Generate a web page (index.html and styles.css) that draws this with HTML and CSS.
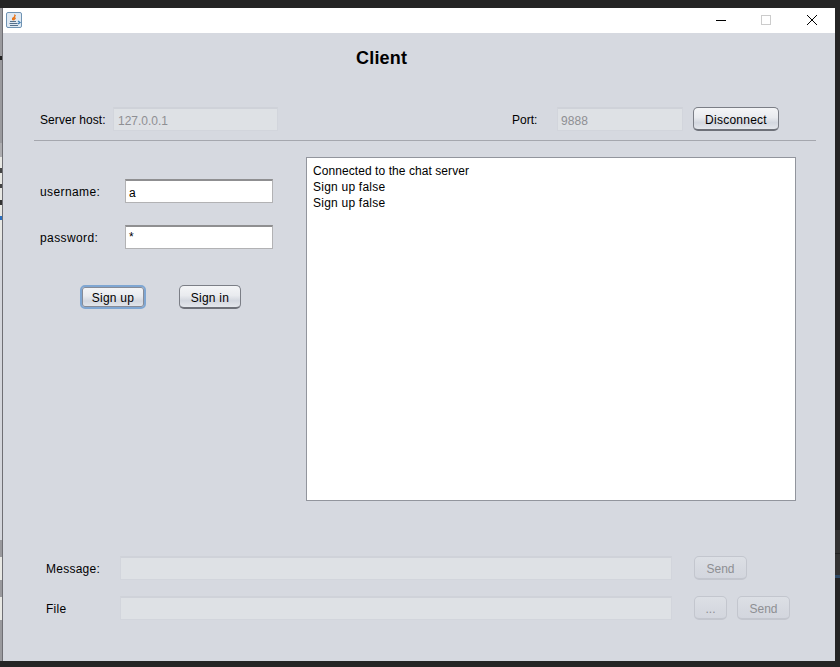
FILE: index.html
```html
<!DOCTYPE html>
<html lang="en">

<head>
  <meta charset="UTF-8">
  <meta name="viewport" content="width=device-width, initial-scale=1.0">
  <title>Client</title>
  <link rel="stylesheet" href="styles.css">
</head>

<body>
  <div class="desktop">
    <div class="behind-left"></div>
    <div class="window">
      <div class="titlebar">
        <svg class="app-icon" width="16" height="16" viewBox="0 0 16 16">
          <rect x="0.5" y="0.5" width="15" height="15" rx="1.5" fill="#dfe9f3" stroke="#6f93b3"/>
          <path d="M8.5 2 L10 3.5 L9 5 L10 6.5 L8 8.5 L6 8 L6 6 L8 4.5 Z" fill="#e8771e"/>
          <path d="M4 9.5 H10 M3.5 11.5 H11.5 M4 13.5 H12" stroke="#55708c" stroke-width="1" fill="none"/>
          <path d="M12 9 L14 10.5 L12 12" stroke="#3f7fb5" stroke-width="1.3" fill="none"/>
        </svg>
        <div class="win-buttons">
          <svg class="win-btn" width="10" height="10" viewBox="0 0 10 10"><path d="M0 5.5 H10" stroke="#000" fill="none"/></svg>
          <svg class="win-btn" width="10" height="10" viewBox="0 0 10 10"><rect x="0.5" y="0.5" width="9" height="9" stroke="#ccc" fill="none"/></svg>
          <svg class="win-btn win-close" width="10" height="10" viewBox="0 0 10 10"><path d="M0 0 L10 10 M10 0 L0 10" stroke="#000" fill="none"/></svg>
        </div>
      </div>

      <div class="content">
        <h1 class="heading">Client</h1>

        <div class="server-row">
          <label class="lbl host-lbl">Server host:</label>
          <input class="field host-field" type="text" value="127.0.0.1" disabled>
          <label class="lbl port-lbl">Port:</label>
          <input class="field port-field" type="text" value="9888" disabled>
          <button class="btn disconnect-btn">Disconnect</button>
        </div>

        <div class="separator"></div>

        <div class="main-row">
          <div class="login-panel">
            <div class="login-row">
              <label class="lbl login-lbl">username:</label>
              <input class="input" type="text" value="a">
            </div>
            <div class="login-row">
              <label class="lbl login-lbl">password:</label>
              <div class="input password">*</div>
            </div>
            <div class="login-buttons">
              <button class="btn signup-btn">Sign up</button>
              <button class="btn signin-btn">Sign in</button>
            </div>
          </div>
          <div class="chat-log">
            <div class="log-line">Connected to the chat server</div>
            <div class="log-line log-status">Sign up false</div>
            <div class="log-line log-status">Sign up false</div>
          </div>
        </div>

        <div class="send-row message-row">
          <label class="lbl send-lbl">Message:</label>
          <input class="field send-field" type="text" disabled>
          <button class="btn send-btn" disabled>Send</button>
        </div>
        <div class="send-row file-row">
          <label class="lbl send-lbl">File</label>
          <input class="field send-field" type="text" disabled>
          <button class="btn browse-btn" disabled>...</button>
          <button class="btn send-btn" disabled>Send</button>
        </div>
      </div>
    </div>
    <div class="behind-right"></div>
  </div>
</body>

</html>
```

FILE: styles.css
```css
html, body {
  margin: 0;
  padding: 0;
  height: 100%;
  overflow: hidden;
  background-color: #252525;
}

body {
  font-family: "Liberation Sans", Arial, sans-serif;
  font-size: 12px;
  color: #000;
}

.desktop {
  display: flex;
  padding-top: 8px;
}

/* other windows showing at the screen edges */
.behind-left {
  width: 3px;
  height: 653px;
  box-sizing: border-box;
  border-right: 1px solid #6f6f74;
  background: linear-gradient(#9a9a9e 0 48px, #222 48px 52px, #9a9a9e 52px 135px, #adadb0 135px 149px,
    #e8e8e4 149px 160px, #444 160px 165px, #e8e8e4 165px 176px, #444 176px 180px, #e8e8e4 180px 192px,
    #333 192px 197px, #e8e8e4 197px 208px, #2a6fc0 208px 212px, #e8e8e4 212px 232px,
    #d4d6dc 232px 532px, #9a9a9e 532px 549px, #e8e8e4 549px 572px, #9a9a9e 572px 589px,
    #e8e8e4 589px 612px, #9a9a9e 612px);
}

.behind-right {
  width: 5px;
  height: 653px;
  background: linear-gradient(#252525 0 522px, #333 522px 545px, #222 545px 546px, #333 546px 567px,
    #2f4a66 567px 570px, #252525 570px);
}

.window {
  width: 832px;
  height: 653px;
  background-color: #d6d9e0;
}

.titlebar {
  display: flex;
  justify-content: space-between;
  height: 25px;
  background-color: #fff;
}

.app-icon {
  margin: 4px 0 0 3px;
}

.win-buttons {
  display: flex;
  gap: 35px;
  margin: 7px 18px 0 0;
}

.win-btn {
  display: block;
}

.win-close {
  margin-left: 1px;
}

.content {
  display: flex;
  flex-direction: column;
}

.heading {
  margin: 15px 0 0 353px;
  font-size: 18px;
  line-height: 21px;
  height: 21px;
  font-weight: bold;
  letter-spacing: 0.2px;
}

.lbl {
  display: block;
  padding-top: 2px;
}

.server-row {
  display: flex;
  align-items: center;
  height: 24px;
  margin-top: 38px;
  padding-left: 37px;
}

.host-lbl {
  width: 73px;
  letter-spacing: 0.08px;
}

.port-lbl {
  margin-left: 234px;
  width: 45px;
}

.field {
  height: 24px;
  box-sizing: border-box;
  padding: 2px 3px 0;
  margin: 0;
  border: 1px solid #d2d5dc;
  border-top: 2px solid #cfd2d9;
  background-color: #dee1e5;
  font: inherit;
  color: #8e8f93;
  opacity: 1;
}

.host-field {
  width: 165px;
  padding-left: 4px;
}

.port-field {
  width: 126px;
  letter-spacing: 0.1px;
}

.btn {
  height: 24px;
  box-sizing: border-box;
  padding: 2px 0 0;
  margin: 0;
  font: inherit;
  color: #000;
  letter-spacing: 0.25px;
  border: 1px solid #7b7e86;
  border-bottom: 2px solid #6e7179;
  border-radius: 5px;
  background: linear-gradient(#f4f5f7, #e9ebef 45%, #d3d7df 70%, #e4e7ec);
}

.btn:disabled {
  color: #8e8f93;
  letter-spacing: 0;
  border: 1px solid #c3c6ce;
  border-bottom-width: 2px;
  background: linear-gradient(#dcdfe5, #d6d9e0 60%, #d3d6de);
}

.disconnect-btn {
  margin-left: 10px;
  width: 86px;
}

.separator {
  height: 1px;
  margin: 9px 19px 0 31px;
  background-color: #a5a7ae;
}

.main-row {
  display: flex;
  margin-top: 16px;
}

.login-panel {
  width: 303px;
  flex-shrink: 0;
  padding-top: 22px;
  padding-left: 37px;
  box-sizing: border-box;
}

.login-row {
  display: flex;
  align-items: center;
  height: 24px;
  margin-bottom: 22px;
}

.login-lbl {
  width: 85px;
  letter-spacing: 0.4px;
}

.input {
  width: 148px;
  height: 24px;
  box-sizing: border-box;
  margin: 0;
  padding: 2px 3px 0;
  font: inherit;
  color: #000;
  background-color: #fff;
  border: 1px solid #b2b2b4;
  border-top: 2px solid #8f8f91;
  outline: none;
}

.password {
  padding-top: 0;
  line-height: 20px;
}

.login-buttons {
  display: flex;
  margin-top: 36px;
  padding-left: 40px;
}

.signup-btn {
  width: 66px;
  border: 2px solid #7fa6d2;
  box-shadow: inset 0 0 0 1px #868b97;
}

.signin-btn {
  width: 62px;
  margin-left: 33px;
}

.chat-log {
  width: 490px;
  height: 344px;
  box-sizing: border-box;
  padding: 5px 6px;
  line-height: 16px;
  background-color: #fff;
  border: 1px solid #92959d;
}

.log-line {
  letter-spacing: 0.07px;
}

.log-status {
  letter-spacing: 0.23px;
}

.send-row {
  display: flex;
  align-items: center;
  height: 24px;
  padding-left: 43px;
}

.message-row {
  margin-top: 55px;
}

.file-row {
  margin-top: 16px;
}

.send-lbl {
  width: 74px;
  letter-spacing: 0.25px;
}

.send-field {
  width: 552px;
  margin-right: 22px;
}

.send-btn {
  width: 53px;
}

.browse-btn {
  width: 33px;
  margin-right: 10px;
}
```
